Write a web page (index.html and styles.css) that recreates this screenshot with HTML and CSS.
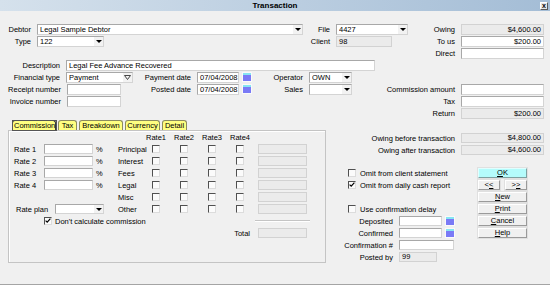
FILE: index.html
```html
<!DOCTYPE html>
<html lang="en">

<head>
    <meta charset="UTF-8">
    <meta name="viewport" content="width=device-width, initial-scale=1.0">
    <title>Transaction</title>
    <link rel="stylesheet" href="styles.css">
</head>

<body>
<div class="window">

    <div class="titlebar">
        <span></span>
        <span class="title">Transaction</span>
        <span class="close">x</span>
    </div>

    <!-- datos principales -->
    <div class="top">
        <div class="row r-debtor">
            <label class="lbl">Debtor</label>
            <div class="fld combo"><span class="val">Legal Sample Debtor</span><span class="arrow"></span></div>
            <label class="lbl">File</label>
            <div class="fld combo"><span class="val">4427</span><span class="arrow"></span></div>
            <label class="lbl">Owing</label>
            <div class="fld ro num">$4,600.00</div>
        </div>
        <div class="row r-type">
            <label class="lbl">Type</label>
            <div class="fld combo"><span class="val">122</span><span class="arrow"></span></div>
            <label class="lbl">Client</label>
            <div class="fld ro">98</div>
            <label class="lbl">To us</label>
            <div class="fld num">$200.00</div>
        </div>
        <div class="row r-wide">
            <label class="lbl">Direct</label>
            <div class="fld"></div>
        </div>
        <div class="row r-desc">
            <label class="lbl">Description</label>
            <div class="fld">Legal Fee Advance Recovered</div>
        </div>
        <div class="row r-fin">
            <label class="lbl">Financial type</label>
            <div class="fld combo"><span class="val">Payment</span><span class="arrow hollow"><svg width="7" height="5" viewBox="0 0 7 5"><path d="M0.5 0.5h6l-3 4z" fill="none" stroke="#333" stroke-width="0.9"/></svg></span></div>
            <label class="lbl">Payment date</label>
            <div class="fld">07/04/2008</div>
            <span class="cal"></span>
            <label class="lbl">Operator</label>
            <div class="fld combo"><span class="val">OWN</span><span class="arrow"></span></div>
        </div>
        <div class="row r-receipt">
            <label class="lbl">Receipt number</label>
            <div class="fld"></div>
            <label class="lbl">Posted date</label>
            <div class="fld">07/04/2008</div>
            <span class="cal"></span>
            <label class="lbl">Sales</label>
            <div class="fld combo"><span class="val"></span><span class="arrow"></span></div>
            <label class="lbl">Commission amount</label>
            <div class="fld"></div>
        </div>
        <div class="row r-invoice">
            <label class="lbl">Invoice number</label>
            <div class="fld"></div>
            <label class="lbl">Tax</label>
            <div class="fld"></div>
        </div>
        <div class="row r-wide">
            <label class="lbl">Return</label>
            <div class="fld ro num">$200.00</div>
        </div>
    </div>

    <div class="lower">
        <div class="tabarea">
            <div class="tabs">
                <span class="tab sel"><span>Commission</span></span>
                <span class="tab">Tax</span>
                <span class="tab">Breakdown</span>
                <span class="tab">Currency</span>
                <span class="tab">Detail</span>
            </div>
            <div class="panel">
                <div class="pgrid">
                    <span class="skip"></span><span></span>
                    <span class="hdr">Rate1</span><span class="hdr">Rate2</span><span class="hdr">Rate3</span><span class="hdr">Rate4</span>
                    <span></span>

                    <span>Rate 1</span><div class="fld"></div><span class="pct">%</span><span>Principal</span>
                    <span class="cb"></span><span class="cb"></span><span class="cb"></span><span class="cb"></span>
                    <div class="fld ro"></div>

                    <span>Rate 2</span><div class="fld"></div><span class="pct">%</span><span>Interest</span>
                    <span class="cb"></span><span class="cb"></span><span class="cb"></span><span class="cb"></span>
                    <div class="fld ro"></div>

                    <span>Rate 3</span><div class="fld"></div><span class="pct">%</span><span>Fees</span>
                    <span class="cb"></span><span class="cb"></span><span class="cb"></span><span class="cb"></span>
                    <div class="fld ro"></div>

                    <span>Rate 4</span><div class="fld"></div><span class="pct">%</span><span>Legal</span>
                    <span class="cb"></span><span class="cb"></span><span class="cb"></span><span class="cb"></span>
                    <div class="fld ro"></div>

                    <span class="skip"></span><span>Misc</span>
                    <span class="cb"></span><span class="cb"></span><span class="cb"></span><span class="cb"></span>
                    <div class="fld ro"></div>

                    <div class="plan">
                        <span class="plan-lbl">Rate plan</span>
                        <div class="fld combo"><span class="val"></span><span class="arrow"></span></div>
                    </div>
                    <span>Other</span>
                    <span class="cb"></span><span class="cb"></span><span class="cb"></span><span class="cb"></span>
                    <div class="fld ro"></div>

                    <span></span>
                    <div class="nocalc">
                        <span class="cb on"><svg viewBox="0 0 6 6"><path d="M0.6 2.6l1.6 1.6 3.2-3.6" fill="none" stroke="#000" stroke-width="1.2"/></svg></span>
                        Don't calculate commission
                    </div>
                    <div class="sep"></div>

                    <span class="total">Total</span>
                    <div class="fld ro"></div>
                </div>
            </div>
        </div>

        <div class="side">
            <div class="row r-side">
                <label class="lbl">Owing before transaction</label>
                <div class="fld ro num">$4,800.00</div>
            </div>
            <div class="row r-side">
                <label class="lbl">Owing after transaction</label>
                <div class="fld ro num">$4,600.00</div>
            </div>

            <div class="side-bottom">
                <div class="opts">
                    <div class="chk-row"><span class="cb"></span>Omit from client statement</div>
                    <div class="chk-row"><span class="cb on"><svg viewBox="0 0 6 6"><path d="M0.6 2.6l1.6 1.6 3.2-3.6" fill="none" stroke="#000" stroke-width="1.2"/></svg></span>Omit from daily cash report</div>
                    <div class="spacer"></div>
                    <div class="chk-row"><span class="cb"></span>Use confirmation delay</div>
                    <div class="row r-date">
                        <label class="lbl">Deposited</label>
                        <div class="fld"></div>
                        <span class="cal"></span>
                    </div>
                    <div class="row r-date">
                        <label class="lbl">Confirmed</label>
                        <div class="fld"></div>
                        <span class="cal"></span>
                    </div>
                    <div class="row r-confno">
                        <label class="lbl">Confirmation #</label>
                        <div class="fld"></div>
                    </div>
                    <div class="row r-posted">
                        <label class="lbl">Posted by</label>
                        <div class="fld ro">99</div>
                    </div>
                </div>

                <div class="buttons">
                    <span class="btn ok"><u>O</u>K</span>
                    <div class="nav">
                        <span class="btn">&lt;<u>&lt;</u></span>
                        <span class="btn">&gt;<u>&gt;</u></span>
                    </div>
                    <span class="btn"><u>N</u>ew</span>
                    <span class="btn"><u>P</u>rint</span>
                    <span class="btn"><u>C</u>ancel</span>
                    <span class="btn"><u>H</u>elp</span>
                </div>
            </div>
        </div>
    </div>

</div>
</body>

</html>
```

FILE: styles.css
```css
* {
    box-sizing: border-box;
}

body {
    margin: 0;
    font-family: "Liberation Sans", Arial, sans-serif;
    font-size: 7.5px;
    color: #000;
    background: #f0f0f0;
}

.window {
    width: 550px;
    height: 285px;
    background: #f0f0f0;
    border-bottom: 1px solid #a4a4a4;
    overflow: hidden;
}

/* barra de titulo */
.titlebar {
    height: 11px;
    display: grid;
    grid-template-columns: 1fr auto 1fr;
    align-items: center;
    background: linear-gradient(to right, #d5e1ec, #a4bdd6);
}

.title {
    font-weight: bold;
    font-size: 8px;
    line-height: 11px;
}

.close {
    justify-self: end;
    margin-right: 2px;
    width: 8px;
    height: 8px;
    border: 1px solid;
    border-color: #fff #5a5a5a #5a5a5a #fff;
    background: #e6e6e6;
    font-weight: bold;
    font-size: 7px;
    line-height: 5px;
    text-align: center;
}

/* filas del formulario */
.top {
    padding-top: 13px;
}

.row {
    display: grid;
    height: 12px;
    align-items: start;
}

.r-debtor { grid-template-columns: 37px 266px 33px 72px 53px 83px; }
.r-type { grid-template-columns: 37px 67px 232px 56px 69px 83px; }
.r-wide { grid-template-columns: 461px 83px; }
.r-desc { grid-template-columns: 66px 309px; }
.r-fin { grid-template-columns: 66px 67px 64px 42px 11px 59px 43px; }
.r-receipt { grid-template-columns: 67px 54px 76px 42px 11px 59px 43px 109px 83px; }
.r-invoice { grid-template-columns: 67px 54px 340px 83px; }

.lbl {
    text-align: right;
    padding-right: 6px;
    white-space: nowrap;
    line-height: 11px;
}

.fld {
    height: 11px;
    background: #fff;
    border: 1px solid;
    border-color: #a8a8a8 #d4d4d4 #d4d4d4 #a8a8a8;
    padding: 0 2px;
    line-height: 9px;
    white-space: nowrap;
    overflow: hidden;
}

.fld.ro {
    background: #ebebeb;
    border-color: #d2d2d2;
}

.num {
    text-align: right;
}

.combo {
    display: flex;
    padding-right: 0;
}

.combo .val {
    flex: 1;
    overflow: hidden;
}

.combo .arrow {
    width: 9px;
    display: flex;
    align-items: center;
    justify-content: center;
    background: #f2f2f2;
}

.combo .arrow::after {
    content: "";
    border-left: 3px solid transparent;
    border-right: 3px solid transparent;
    border-top: 3px solid #000;
}

.combo .arrow.hollow::after {
    display: none;
}

.cal {
    width: 8px;
    height: 8px;
    margin: 1px 0 0 4px;
    background: #7a7af6;
    border-top: 2px solid #86e6f2;
    box-shadow: 0 0 0 1px #fafafa;
}

/* pestañas */
.lower {
    display: flex;
}

.tabarea {
    width: 318px;
    margin-left: 8px;
}

.tabs {
    display: grid;
    grid-template-columns: 44px 19px 44px 35px 25px;
    column-gap: 2px;
    height: 10px;
    padding-left: 4px;
}

.tab {
    height: 10px;
    background: #ffff80;
    border: 1px solid #8c8c5e;
    border-bottom: 0;
    border-radius: 3px 3px 0 0;
    text-align: center;
    line-height: 9px;
    white-space: nowrap;
}

.tab.sel {
    border-color: #3a3a3a;
}

.tab.sel span {
    outline: 1px solid #555;
    padding: 0 1px;
}

.panel {
    height: 133px;
    border: 1px solid #c4c4c4;
    box-shadow: inset 1px 1px 0 #fff;
    padding-left: 5px;
}

.pgrid {
    display: grid;
    grid-template-columns: 30px 49px 25px 28px 28px 28px 28px 28px 49px;
    grid-auto-rows: 12px;
    align-items: center;
    white-space: nowrap;
}

.pgrid .fld,
.side .fld {
    height: 10px;
    line-height: 8px;
}

.skip {
    grid-column: span 3;
}

.pct {
    padding-left: 3px;
}

.cb {
    width: 8px;
    height: 8px;
    border: 1px solid;
    border-color: #505050 #dcdcdc #dcdcdc #505050;
    background: #fbfbfb;
    display: flex;
}

.cb svg {
    width: 6px;
    height: 6px;
}

.pgrid .cb {
    margin-left: 6px;
}

.plan {
    grid-column: span 3;
    display: flex;
    align-items: center;
}

.plan-lbl {
    width: 41px;
    padding-left: 2px;
}

.plan .fld {
    width: 49px;
}

.nocalc {
    grid-column: span 7;
    display: flex;
    align-items: center;
    gap: 3px;
}

.pgrid .nocalc .cb {
    margin-left: 0;
}

.sep {
    margin: 0 -3px;
    height: 2px;
    border-top: 1px solid #c4c4c4;
    border-bottom: 1px solid #fff;
}

.total {
    grid-column: span 8;
    text-align: right;
    padding-right: 8px;
}

/* lado derecho */
.side {
    flex: 1;
    padding-top: 12px;
}

.side .row {
    align-items: center;
}

.r-side { grid-template-columns: 135px 83px; }
.r-date { grid-template-columns: 63px 43px 12px; }
.r-confno { grid-template-columns: 63px 55px; }
.r-posted { grid-template-columns: 63px 38px; }

.r-date .cal {
    margin-top: 0;
}

.side-bottom {
    display: flex;
    margin-top: 11px;
}

.opts {
    width: 142px;
    margin-left: 10px;
}

.chk-row {
    height: 12px;
    display: flex;
    align-items: center;
    gap: 4px;
    padding-left: 12px;
    white-space: nowrap;
}

.spacer {
    height: 12px;
}

.buttons {
    width: 49px;
    display: flex;
    flex-direction: column;
    gap: 2px;
    padding-top: 1px;
}

.btn {
    display: block;
    height: 10px;
    border: 1px solid;
    border-color: #fff #9a9a9a #9a9a9a #fff;
    background: #f0f0f0;
    text-align: center;
    line-height: 8px;
    box-shadow: 0 0 0 1px #e0e0e0;
}

.btn.ok {
    background: #b4fcfc;
    border-color: #e0ffff #7ea2a2 #7ea2a2 #e0ffff;
}

.nav {
    display: flex;
    justify-content: space-between;
}

.nav .btn {
    width: 22px;
}
```
